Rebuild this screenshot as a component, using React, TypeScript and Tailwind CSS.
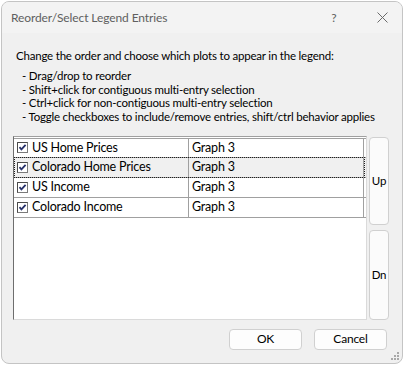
const rows = [
  { name: "US Home Prices", graph: "Graph 3", selected: false },
  { name: "Colorado Home Prices", graph: "Graph 3", selected: true },
  { name: "US Income", graph: "Graph 3", selected: false },
  { name: "Colorado Income", graph: "Graph 3", selected: false },
];

const hints = [
  "- Drag/drop to reorder",
  "- Shift+click for contiguous multi-entry selection",
  "- Ctrl+click for non-contiguous multi-entry selection",
  "- Toggle checkboxes to include/remove entries, shift/ctrl behavior applies",
];

const CheckBox = () => (
  <svg width="11" height="11" viewBox="0 0 11 11" className="shrink-0">
    <rect x="0.5" y="0.5" width="10" height="10" fill="#fff" stroke="#7a7a7a" />
    <path d="M0.5 10.5V0.5H10.5" fill="none" stroke="#4a4a4a" />
    <path d="M2.5 5.2L4.4 7.3L8.6 2.8" fill="none" stroke="#27326b" strokeWidth="1.8" />
  </svg>
);

const Grip = () => (
  <svg width="8" height="8" viewBox="0 0 8 8">
    <g fill="#a8a8a8">
      <rect x="6" y="0" width="2" height="2" />
      <rect x="3" y="3" width="2" height="2" />
      <rect x="6" y="3" width="2" height="2" />
      <rect x="0" y="6" width="2" height="2" />
      <rect x="3" y="6" width="2" height="2" />
      <rect x="6" y="6" width="2" height="2" />
    </g>
  </svg>
);

export default function App() {
  return (
    <div className="w-[404px] h-[365px] bg-white pl-[1px] pt-[1px] font-['Lato',sans-serif]">
      <div className="relative w-[402px] h-[363px] flex flex-col rounded-[8px] border border-[#c4c4c4] bg-[#f0f0f0] overflow-hidden">
        <div className="h-[31px] shrink-0 flex items-center bg-[#f3f3f3] pl-[9px] pr-[14px] text-[12px] tracking-[-0.1px] text-[#606060]">
          <span className="flex-1">Reorder/Select Legend Entries</span>
          <span className="w-[12px] text-center mr-[37px]">?</span>
          <svg width="11" height="11" viewBox="0 0 11 11">
            <path d="M0.5 0.5L10.5 10.5M10.5 0.5L0.5 10.5" stroke="#6a6a6a" strokeWidth="1" />
          </svg>
        </div>

        <div className="flex-1 flex flex-col px-[11px] pt-[15px] text-[11.5px] tracking-[-0.2px] text-black">
          <p className="leading-[16px] pl-[3px] whitespace-nowrap">
            Change the order and choose which plots to appear in the legend:
          </p>
          <ul className="mt-[5px] pl-[9px] leading-[13.7px] whitespace-nowrap">
            {hints.map((h) => (
              <li key={h}>{h}</li>
            ))}
          </ul>

          <div className="mt-[12px] flex gap-[2px]">
            <div className="w-[354px] h-[184px] bg-white border border-t-[#a0a0a0] border-l-[#6e6e6e] border-b-[#dadada] border-r-[#dadada] pt-[1px] text-[12.5px]">
              {rows.map((r, i) => (
                <div
                  key={r.name}
                  className={`relative flex h-[20px] border-b border-[#a0a0a0] ${i === 0 ? "border-t" : ""} ${r.selected ? "bg-[#f0f0f0]" : ""}`}
                >
                  <div className="w-[175px] flex items-center gap-[4px] pl-[3px] border-r border-[#a0a0a0]">
                    <CheckBox />
                    <span className="leading-none">{r.name}</span>
                  </div>
                  <div className="w-[175px] flex items-center pl-[3px] border-r border-[#a0a0a0]">
                    <span className="leading-none">{r.graph}</span>
                  </div>
                  {r.selected && (
                    <div className="absolute -inset-y-[1px] left-0 w-[351px] border border-dotted border-[#202020]" />
                  )}
                </div>
              ))}
            </div>
            <div className="flex flex-col gap-[5px] pt-[1px]">
              <button className="w-[20px] h-[88px] flex items-center justify-center p-0 rounded-[4px] border border-[#d0d0d0] bg-[#fbfbfb] text-[11.5px] leading-none">
                Up
              </button>
              <button className="w-[20px] h-[90px] flex items-center justify-center p-0 rounded-[4px] border border-[#d0d0d0] bg-[#fbfbfb] text-[11.5px] leading-none">
                Dn
              </button>
            </div>
          </div>

          <div className="mt-[9px] flex justify-end gap-[12px] pr-[4px]">
            <button className="w-[73px] h-[21px] rounded-[4px] border border-[#d0d0d0] bg-[#fdfdfd] text-[12px]">
              OK
            </button>
            <button className="w-[73px] h-[21px] rounded-[4px] border border-[#d0d0d0] bg-[#fdfdfd] text-[12px]">
              Cancel
            </button>
          </div>
        </div>

        <div className="absolute right-[3px] bottom-[3px]">
          <Grip />
        </div>
      </div>
    </div>
  );
}
